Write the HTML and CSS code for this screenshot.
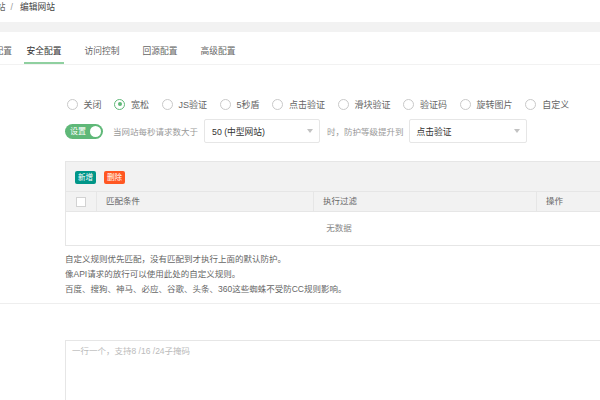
FILE: index.html
```html
<!DOCTYPE html>
<html lang="zh-CN">
<head>
<meta charset="utf-8">
<title>编辑网站</title>
<link rel="stylesheet" href="styles.css">
</head>
<body>
<div class="crumb"><span class="crumb-prev">网站</span><span class="sep">/</span><span class="crumb-cur">编辑网站</span></div>
<div class="gap"></div>
<div class="card">
  <ul class="tabs">
    <li class="tab first">基础配置</li>
    <li class="tab active">安全配置</li>
    <li class="tab">访问控制</li>
    <li class="tab">回源配置</li>
    <li class="tab">高级配置</li>
  </ul>
  <div class="form">
    <div class="radios">
      <label class="radio"><i class="circle"></i>关闭</label>
      <label class="radio on"><i class="circle"></i>宽松</label>
      <label class="radio"><i class="circle"></i>JS验证</label>
      <label class="radio"><i class="circle"></i>5秒盾</label>
      <label class="radio"><i class="circle"></i>点击验证</label>
      <label class="radio"><i class="circle"></i>滑块验证</label>
      <label class="radio"><i class="circle"></i>验证码</label>
      <label class="radio"><i class="circle"></i>旋转图片</label>
      <label class="radio"><i class="circle"></i>自定义</label>
    </div>
    <div class="rule-row">
      <span class="switch"><em>设置</em><i class="knob"></i></span>
      <span class="hint hint-1">当网站每秒请求数大于</span>
      <div class="select select-1"><span>50 (中型网站)</span><i class="caret"></i></div>
      <span class="hint hint-2">时，防护等级提升到</span>
      <div class="select select-2"><span>点击验证</span><i class="caret"></i></div>
    </div>
    <div class="table">
      <div class="toolbar">
        <span class="btn btn-add">新增</span>
        <span class="btn btn-del">删除</span>
      </div>
      <div class="thead">
        <div class="cell cell-check"><i class="checkbox"></i></div>
        <div class="cell">匹配条件</div>
        <div class="cell">执行过滤</div>
        <div class="cell cell-last">操作</div>
      </div>
      <div class="tbody">无数据</div>
    </div>
    <div class="notes">
      <p>自定义规则优先匹配，没有匹配到才执行上面的默认防护。</p>
      <p>像API请求的放行可以使用此处的自定义规则。</p>
      <p>百度、搜狗、神马、必应、谷歌、头条、360这些蜘蛛不受防CC规则影响。</p>
    </div>
  </div>
  <div class="divider"></div>
  <div class="ip-block">
    <textarea class="textarea" placeholder="一行一个，支持8 /16 /24子掩码"></textarea>
  </div>
</div>
</body>
</html>
```
FILE: styles.css
```css
html, body {
  margin: 0;
  padding: 0;
  width: 600px;
  height: 400px;
  overflow: hidden;
  background: #fff;
}
body {
  font-family: "Liberation Sans", "Noto Sans CJK SC", sans-serif;
  font-size: 9px;
  color: #666;
}

/* breadcrumb */
.crumb {
  display: flex;
  height: 22px;
  line-height: 14px;
  margin-left: -12px;
  font-size: 8.75px;
}
.crumb-prev { color: #666; }
.sep { color: #999; margin: 0 7px 0 5px; }
.crumb-cur { color: #444; }

.gap {
  height: 10px;
  background: #f2f2f2;
}

/* tabs */
.tabs {
  list-style: none;
  margin: 0 0 0 -25.5px;
  padding: 0;
  display: flex;
  border-bottom: 1px solid #f2f2f2;
  font-size: 8.75px;
}
.tab {
  padding: 9px 2.5px 0;
  line-height: 21px;
  border-bottom: 2px solid transparent;
  margin-right: 18px;
  color: #666;
  white-space: nowrap;
}
.tab.first { margin-right: 9.5px; }
.tab.active {
  color: #333;
  border-bottom-color: #8fd0a0;
}

/* form */
.form {
  padding: 30px 0 0 65px;
}
.radios {
  display: flex;
  align-items: center;
  height: 18px;
  margin-left: 1.5px;
  white-space: nowrap;
}
.radio {
  display: flex;
  align-items: center;
  margin-right: 12.5px;
  color: #666;
}
.circle {
  width: 11px;
  height: 11px;
  box-sizing: border-box;
  border: 1px solid #c9c9c9;
  border-radius: 50%;
  margin-right: 6px;
  position: relative;
}
.radio.on .circle { border-color: #5fb878; }
.radio.on .circle::after {
  content: "";
  position: absolute;
  left: 2.5px;
  top: 2.5px;
  width: 4px;
  height: 4px;
  border-radius: 50%;
  background: #5fb878;
}

.rule-row {
  display: flex;
  align-items: center;
  height: 24px;
  margin-top: 6px;
  white-space: nowrap;
}
.switch {
  display: flex;
  align-items: center;
  justify-content: space-between;
  box-sizing: border-box;
  width: 38px;
  height: 15px;
  border-radius: 8px;
  background: #5fb878;
  padding: 0 2px 0 5px;
}
.switch em {
  font-style: normal;
  color: #fff;
  font-size: 8px;
  line-height: 15px;
}
.knob {
  width: 11px;
  height: 11px;
  border-radius: 50%;
  background: #fff;
}
.hint {
  font-size: 8.5px;
  color: #999;
}
.hint-1 { margin: 0 6px 0 10px; }
.hint-2 { margin: 0 5px 0 7px; }
.select {
  display: flex;
  align-items: center;
  justify-content: space-between;
  box-sizing: border-box;
  height: 24px;
  border: 1px solid #e6e6e6;
  border-radius: 2px;
  padding: 0 6px 0 7px;
  color: #333;
  font-size: 8.75px;
}
.select-1 { width: 116px; }
.select-2 { width: 118px; }
.caret {
  width: 0;
  height: 0;
  border-left: 3.5px solid transparent;
  border-right: 3.5px solid transparent;
  border-top: 4px solid #c2c2c2;
}

/* table */
.table {
  margin-top: 18px;
  width: 546px;
  border: 1px solid #e6e6e6;
}
.toolbar {
  height: 30px;
  box-sizing: border-box;
  padding: 9px 0 0 9px;
  background: #f2f2f2;
  border-bottom: 1px solid #e6e6e6;
  display: flex;
  align-items: flex-start;
  gap: 8px;
}
.btn {
  display: block;
  width: 21px;
  height: 13px;
  line-height: 13px;
  text-align: center;
  color: #fff;
  font-size: 7.5px;
  border-radius: 2px;
}
.btn-add { background: #009688; }
.btn-del { background: #ff5722; }
.thead {
  display: grid;
  grid-template-columns: 31px 217px 223px 1fr;
  height: 20px;
  box-sizing: border-box;
  background: #f2f2f2;
  border-bottom: 1px solid #e6e6e6;
  font-size: 8.5px;
}
.cell {
  box-sizing: border-box;
  border-right: 1px solid #e6e6e6;
  padding-left: 9px;
  line-height: 19px;
  color: #666;
  white-space: nowrap;
}
.cell-check {
  display: flex;
  align-items: center;
  padding-left: 10px;
}
.cell-last { border-right: none; }
.checkbox {
  width: 10px;
  height: 10px;
  box-sizing: border-box;
  border: 1px solid #d2d2d2;
  background: #fff;
}
.tbody {
  height: 33px;
  line-height: 33px;
  text-align: center;
  color: #888;
  font-size: 8.5px;
}

/* notes */
.notes {
  margin-top: 6px;
  font-size: 8.5px;
  line-height: 15px;
  color: #666;
}
.notes p { margin: 0; white-space: nowrap; }

.divider {
  margin-top: 6px;
  height: 1px;
  background: #eee;
}

.ip-block {
  padding: 36px 0 0 65px;
}
.textarea {
  display: block;
  box-sizing: border-box;
  width: 560px;
  height: 61px;
  margin: 0;
  border: 1px solid #e6e6e6;
  border-bottom: none;
  border-radius: 0;
  padding: 3px 6px;
  font-family: "Liberation Sans", "Noto Sans CJK SC", sans-serif;
  font-size: 8.5px;
  line-height: 15px;
  color: #333;
  resize: none;
  outline: none;
}
.textarea::placeholder { color: #bbb; }
```
